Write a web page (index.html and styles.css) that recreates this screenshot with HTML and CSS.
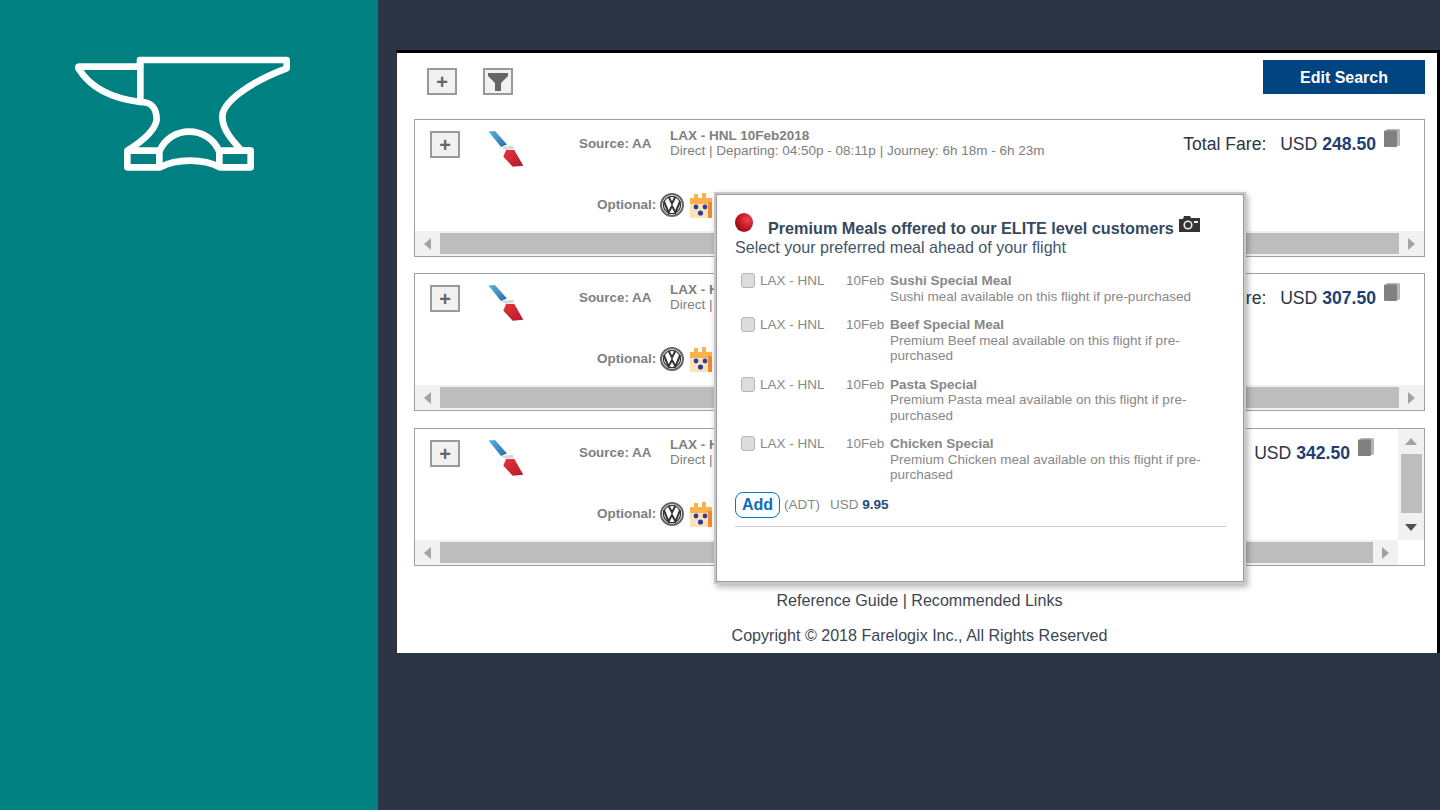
FILE: index.html
```html
<!DOCTYPE html>
<html lang="en">
<head>
<meta charset="utf-8">
<title>Premium Meals</title>
<link rel="stylesheet" href="styles.css">
</head>
<body>
<svg width="0" height="0" class="defs">
  <defs>
    <linearGradient id="aablue" x1="0" y1="0" x2="1" y2="1">
      <stop offset="0" stop-color="#55b4e0"/>
      <stop offset="1" stop-color="#2a6ca8"/>
    </linearGradient>
    <linearGradient id="aared" x1="0" y1="0" x2="1" y2="1">
      <stop offset="0" stop-color="#e8343f"/>
      <stop offset="1" stop-color="#b01c2a"/>
    </linearGradient>
    <symbol id="aa" viewBox="0 0 40 40">
      <polygon points="2.5,2.5 9,2 21,15.5 15,18" fill="url(#aablue)"/>
      <polygon points="15,18 27,16.5 28,20 20,21" fill="#d4d9de"/>
      <polygon points="20,21 28.3,21 37.3,36.7 26.7,37.7 17.3,27.7" fill="url(#aared)"/>
    </symbol>
    <symbol id="vw" viewBox="0 0 24 24">
      <circle cx="12" cy="12" r="11" fill="#fff" stroke="#666" stroke-width="2"/>
      <circle cx="12" cy="12" r="8.6" fill="#fff" stroke="#333" stroke-width="1.2"/>
      <path d="M8.5 3.6 12 10.5 15.5 3.6M3.8 8 8.5 19.5 12 13 15.5 19.5 20.2 8" fill="none" stroke="#333" stroke-width="2"/>
    </symbol>
    <symbol id="gift" viewBox="0 0 22 26">
      <rect x="0" y="6" width="22" height="20" fill="#fde3bd"/>
      <rect x="0" y="6" width="22" height="6" fill="#f9b24c"/>
      <rect x="4" y="2" width="4" height="5" fill="#f9b24c"/>
      <rect x="12" y="1" width="4" height="6" fill="#f9b24c"/>
      <rect x="18" y="10" width="4" height="16" fill="#f08a2d"/>
      <circle cx="6" cy="15" r="2.4" fill="#2f3f99"/>
      <circle cx="15" cy="15" r="2.4" fill="#2f3f99"/>
      <circle cx="10.5" cy="21" r="2.6" fill="#2f3f99"/>
    </symbol>
    <symbol id="book" viewBox="0 0 16 18">
      <rect x="2" y="0" width="14" height="17" rx="1.5" fill="#b5b5b5"/>
      <rect x="0" y="1.5" width="13" height="16.5" rx="1" fill="#808080"/>
    </symbol>
  </defs>
</svg>
<div class="slide">
  <aside class="sidebar">
    <svg class="anvil" viewBox="0 0 750 450" width="250" height="150">
      <path d="M240 80H58Q52 80 57 88C90 140 150 175 240 186C262 186 290 190 290 240C285 270 245 305 202 332V382H300C350 355 430 355 480 382H572V332H545C520 305 487 270 487 230C487 190 560 130 680 85V60H240Z" fill="none" stroke="#fff" stroke-width="20" stroke-linejoin="round"/>
      <path d="M241 60V186M202 332H298M298 382V335C330 255 445 255 478 335V382M478 332H572" fill="none" stroke="#fff" stroke-width="20" stroke-linejoin="round"/>
    </svg>
  </aside>
  <main class="stage">
    <section class="panel">
      <div class="toolbar">
        <div class="tools">
          <span class="icon-btn">+</span>
          <span class="icon-btn"><svg viewBox="0 0 20 20" width="20" height="20"><path d="M0 1H20V4L13 11V19H7V11L0 4Z" fill="#666"/></svg></span>
        </div>
        <a class="edit">Edit Search</a>
      </div>

      <div class="results">
        <article class="card">
          <div class="card-body">
            <div class="card-content">
              <div class="top-row">
                <span class="icon-btn small">+</span>
                <div class="logo"><svg width="40" height="40"><use href="#aa"/></svg></div>
                <div class="source">Source: AA</div>
                <div class="route"><b>LAX - HNL 10Feb2018</b><br>Direct | Departing: 04:50p - 08:11p | Journey: 6h 18m - 6h 23m</div>
                <div class="fare">Total Fare: &nbsp;<span class="usd">USD <b>248.50</b></span><svg class="book" width="16" height="18"><use href="#book"/></svg></div>
              </div>
              <div class="optional">Optional: <svg width="24" height="24"><use href="#vw"/></svg><svg class="gift" width="22" height="26"><use href="#gift"/></svg></div>
            </div>
          </div>
          <div class="hscroll"><i class="arrow left"></i><i class="thumb"></i><i class="arrow right"></i></div>
        </article>

        <article class="card">
          <div class="card-body">
            <div class="card-content">
              <div class="top-row">
                <span class="icon-btn small">+</span>
                <div class="logo"><svg width="40" height="40"><use href="#aa"/></svg></div>
                <div class="source">Source: AA</div>
                <div class="route"><b>LAX - HNL 10Feb2018</b><br>Direct | Departing: 04:50p - 08:11p | Journey: 6h 18m - 6h 23m</div>
                <div class="fare">Total Fare: &nbsp;<span class="usd">USD <b>307.50</b></span><svg class="book" width="16" height="18"><use href="#book"/></svg></div>
              </div>
              <div class="optional">Optional: <svg width="24" height="24"><use href="#vw"/></svg><svg class="gift" width="22" height="26"><use href="#gift"/></svg></div>
            </div>
          </div>
          <div class="hscroll"><i class="arrow left"></i><i class="thumb"></i><i class="arrow right"></i></div>
        </article>

        <article class="card last">
          <div class="card-body">
            <div class="card-content">
              <div class="top-row">
                <span class="icon-btn small">+</span>
                <div class="logo"><svg width="40" height="40"><use href="#aa"/></svg></div>
                <div class="source">Source: AA</div>
                <div class="route"><b>LAX - HNL 10Feb2018</b><br>Direct | Departing: 04:50p - 08:11p | Journey: 6h 18m - 6h 23m</div>
                <div class="fare">Total Fare: &nbsp;<span class="usd">USD <b>342.50</b></span><svg class="book" width="16" height="18"><use href="#book"/></svg></div>
              </div>
              <div class="optional">Optional: <svg width="24" height="24"><use href="#vw"/></svg><svg class="gift" width="22" height="26"><use href="#gift"/></svg></div>
            </div>
            <div class="vscroll"><i class="arrow up"></i><i class="vthumb"></i><i class="arrow down"></i></div>
          </div>
          <div class="hscroll short"><i class="arrow left"></i><i class="thumb"></i><i class="arrow right"></i></div>
        </article>
      </div>

      <footer class="foot">
        <p>Reference Guide | Recommended Links</p>
        <p>Copyright © 2018 Farelogix Inc., All Rights Reserved</p>
      </footer>

      <div class="popup">
        <div class="pop-title">
          <span class="ball"></span>
          <h2>Premium Meals offered to our ELITE level customers</h2>
          <svg class="camera" viewBox="0 0 21 17" width="21" height="17"><path d="M0 4H4L5 1H11L12 3H21V17H0Z" fill="#333"/><circle cx="9" cy="10" r="4.6" fill="#eee"/><circle cx="9" cy="10" r="3" fill="#333"/><rect x="15" y="6" width="4" height="2" fill="#eee"/></svg>
        </div>
        <p class="pop-sub">Select your preferred meal ahead of your flight</p>
        <ul class="meals">
          <li class="meal"><input class="check" type="checkbox"><span>LAX - HNL</span><span>10Feb</span><div><b>Sushi Special Meal</b><br>Sushi meal available on this flight if pre-purchased</div></li>
          <li class="meal"><input class="check" type="checkbox"><span>LAX - HNL</span><span>10Feb</span><div><b>Beef Special Meal</b><br>Premium Beef meal available on this flight if pre-purchased</div></li>
          <li class="meal"><input class="check" type="checkbox"><span>LAX - HNL</span><span>10Feb</span><div><b>Pasta Special</b><br>Premium Pasta meal available on this flight if pre-purchased</div></li>
          <li class="meal"><input class="check" type="checkbox"><span>LAX - HNL</span><span>10Feb</span><div><b>Chicken Special</b><br>Premium Chicken meal available on this flight if pre-purchased</div></li>
        </ul>
        <div class="add-row">
          <a class="add">Add</a>
          <span class="adt">(ADT)</span>
          <span>USD <b>9.95</b></span>
        </div>
      </div>
    </section>
  </main>
</div>
</body>
</html>
```

FILE: styles.css
```css
* { box-sizing: border-box; }
html, body { margin: 0; padding: 0; }
body { font-family: "Liberation Sans", Arial, sans-serif; overflow: hidden; }
.defs { position: absolute; }
.slide { display: flex; width: 1440px; height: 810px; }
.sidebar { width: 378px; background: #008080; padding: 40px 0 0 60px; }
.anvil { display: block; }
.stage { flex: 1; background: #2c3544; padding: 50px 0 0 18px; }
.panel {
  position: relative;
  height: 603px;
  background: #fff;
  border-top: 3px solid #000;
  border-left: 1px solid #333;
  border-right: 3px solid #000;
  padding: 7px 12px 0 17px;
}
.toolbar { display: flex; justify-content: space-between; align-items: flex-start; height: 59px; }
.tools { display: flex; gap: 26px; padding: 8px 0 0 13px; }
.icon-btn {
  display: flex;
  align-items: center;
  justify-content: center;
  width: 30px;
  height: 27px;
  background: #f1f1f1;
  border: 2px solid #999;
  color: #666;
  font-size: 20px;
  font-weight: 700;
  line-height: 1;
}
.icon-btn.small { flex: none; margin-top: 3px; }
.edit {
  display: block;
  width: 162px;
  height: 34px;
  background: #004481;
  color: #fff;
  font-size: 16px;
  font-weight: 700;
  line-height: 35px;
  text-align: center;
}
.results { display: flex; flex-direction: column; gap: 16px; }
.card {
  display: flex;
  flex-direction: column;
  height: 138px;
  border: 1px solid #9aa2a6;
}
.card.last { margin-top: 1px; }
.card-body { display: flex; flex: 1; min-height: 0; }
.card-content { flex: 1; min-width: 0; }
.top-row { display: flex; padding: 8px 0 0 15px; height: 60px; }
.logo { flex: none; width: 119px; padding: 1px 0 0 26px; }
.logo svg { display: block; }
.source {
  flex: none;
  width: 91px;
  margin-top: 5px;
  color: #80807e;
  font-size: 13.4px;
  font-weight: 700;
  line-height: 22px;
}
.route {
  flex: 1;
  min-width: 0;
  color: #80807e;
  font-size: 13.5px;
  line-height: 15px;
  white-space: nowrap;
}
.fare {
  display: flex;
  flex: none;
  padding-right: 24px;
  color: #2d3545;
  font-size: 17.6px;
  line-height: 22px;
  margin-top: 5px;
  white-space: pre;
}
.usd { margin-left: 4px; }
.usd b { color: #1f3f74; }
.book { margin: -4px 0 0 8px; }
.optional {
  display: flex;
  align-items: center;
  gap: 4px;
  padding: 12px 0 0 182px;
  color: #80807e;
  font-size: 13.5px;
  font-weight: 700;
  height: 37px;
}
.gift { margin-left: 2px; }
.hscroll { display: flex; flex: none; height: 25px; background: #f1f1f1; padding: 2px 0; }
.hscroll.short { margin-right: 26px; }
.thumb { flex: 1; background: #bdbdbd; }
.arrow { display: flex; flex: none; align-items: center; justify-content: center; }
.hscroll .arrow { width: 25px; }
.arrow::before { content: ""; display: block; border-style: solid; border-color: transparent; }
.arrow.left::before { border-width: 6px 7px 6px 0; border-right-color: #a3a3a3; }
.arrow.right::before { border-width: 6px 0 6px 7px; border-left-color: #a3a3a3; }
.vscroll { display: flex; flex: none; flex-direction: column; align-items: center; width: 26px; background: #f1f1f1; }
.arrow.up, .arrow.down { width: 21px; height: 25px; }
.arrow.up::before { border-width: 0 6px 7px; border-bottom-color: #a3a3a3; }
.arrow.down::before { border-width: 7px 6px 0; border-top-color: #505050; }
.vthumb { display: block; width: 21px; height: 59px; background: #bdbdbd; margin-bottom: 2px; }
.foot { color: #3d4652; font-size: 16.1px; line-height: 18px; text-align: center; padding-top: 25px; }
.foot p { margin: 0 0 17px; }
.popup {
  position: absolute;
  left: 319px;
  top: 141px;
  width: 528px;
  height: 388px;
  padding: 18px 17px 0 18px;
  background: #fff;
  border: 1px solid #9a9a9a;
  box-shadow: 0 0 0 2px #c8c8c8, 2px 3px 6px 2px rgba(0, 0, 0, .3);
}
.pop-title { display: flex; align-items: flex-start; }
.ball {
  flex: none;
  width: 18px;
  height: 19px;
  border-radius: 50%;
  background: radial-gradient(circle at 70% 35%, #e8454d, #c41420 50%, #5e0b10 100%);
}
.pop-title h2 {
  margin: 6px 0 0 15px;
  color: #34495e;
  font-size: 16.2px;
  font-weight: 700;
  line-height: 18px;
  white-space: nowrap;
}
.camera { flex: none; margin: 2px 0 0 5px; }
.pop-sub { margin: 1px 0 0; color: #44566a; font-size: 16.1px; line-height: 19px; }
.meals { list-style: none; margin: 16px 0 0; padding: 0; }
.meal {
  display: grid;
  grid-template-columns: 25px 86px 44px 320px;
  margin-bottom: 13px;
  color: #888;
  font-size: 13.5px;
  line-height: 15.5px;
}
.check {
  appearance: none;
  width: 14px;
  height: 15px;
  margin: 0 0 0 6px;
  background: #dcdcdc;
  border: 1px solid #b5b5b5;
  border-radius: 3px;
}
.add-row { display: flex; align-items: center; gap: 10px; margin-top: -4px; padding-bottom: 8px; border-bottom: 1px solid #ccc; color: #888; font-size: 13.5px; }
.add-row b { color: #1f4a80; }
.add {
  display: block;
  width: 45px;
  height: 26px;
  margin-right: -6px;
  border: 1px solid #0078d0;
  border-radius: 8px;
  color: #0a6fc2;
  font-size: 16px;
  font-weight: 700;
  line-height: 24px;
  text-align: center;
}
```
